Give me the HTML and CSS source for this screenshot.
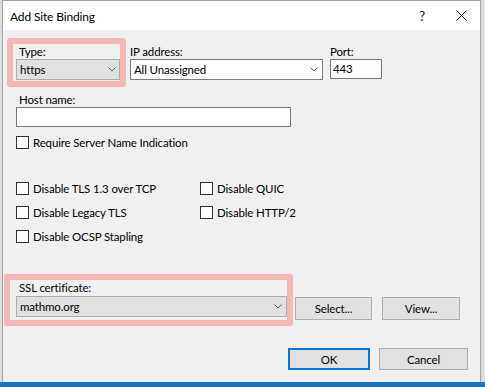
FILE: index.html
```html
<!DOCTYPE html>
<html>
<head>
<meta charset="utf-8">
<link rel="stylesheet" href="styles.css">
</head>
<body>
<div class="screen">
  <div class="dialog">
    <div class="titlebar">
      <span class="title">Add Site Binding</span>
      <span class="help">?</span>
      <svg class="close" width="11" height="11" viewBox="0 0 11 11"><path d="M0.5 0.5 L10.5 10.5 M10.5 0.5 L0.5 10.5" stroke="#111" stroke-width="1" fill="none"/></svg>
    </div>
    <div class="content">
      <div class="row1">
        <div class="hl hl-type">
          <div class="lbl">Type:</div>
          <div class="combo combo-type"><span>https</span><svg class="chev" width="8" height="5" viewBox="0 0 8 5"><path d="M0.5 0.5 L4 4 L7.5 0.5" stroke="#555" fill="none"/></svg></div>
        </div>
        <div class="field ip">
          <div class="lbl0">IP address:</div>
          <div class="combo combo-white combo-ip"><span>All Unassigned</span><svg class="chev" width="8" height="5" viewBox="0 0 8 5"><path d="M0.5 0.5 L4 4 L7.5 0.5" stroke="#555" fill="none"/></svg></div>
        </div>
        <div class="field port">
          <div class="lbl0">Port:</div>
          <div class="textbox tb-port">443</div>
        </div>
      </div>
      <div class="host">
        <div class="lbl">Host name:</div>
        <div class="textbox tb-host"></div>
      </div>
      <div class="check sni"><span class="box"></span><span>Require Server Name Indication</span></div>
      <div class="checks">
        <div class="check"><span class="box"></span><span>Disable TLS 1.3 over TCP</span></div>
        <div class="check"><span class="box"></span><span>Disable QUIC</span></div>
        <div class="check"><span class="box"></span><span>Disable Legacy TLS</span></div>
        <div class="check"><span class="box"></span><span>Disable HTTP/2</span></div>
        <div class="check"><span class="box"></span><span>Disable OCSP Stapling</span></div>
      </div>
      <div class="ssl-row">
        <div class="hl hl-ssl">
          <div class="lbl lbl-ssl">SSL certificate:</div>
          <div class="combo combo-ssl"><span>mathmo.org</span><svg class="chev" width="8" height="5" viewBox="0 0 8 5"><path d="M0.5 0.5 L4 4 L7.5 0.5" stroke="#555" fill="none"/></svg></div>
        </div>
        <div class="btn btn-select">Select...</div>
        <div class="btn btn-view">View...</div>
      </div>
      <div class="actions">
        <div class="btn btn-ok">OK</div>
        <div class="btn btn-cancel">Cancel</div>
      </div>
    </div>
  </div>
</div>
<div class="taskbar"></div>
</body>
</html>
```
FILE: styles.css
```css
* { box-sizing: border-box; }
html, body { margin: 0; padding: 0; }
body {
  width: 485px;
  height: 387px;
  overflow: hidden;
  background: #dedede;
  font-family: Lato, "Noto Sans", sans-serif;
  font-size: 11.5px;
  letter-spacing: -0.15px;
  color: #000;
  display: flex;
  flex-direction: column;
}
.screen {
  height: 382px;
  padding-left: 2px;
  display: flex;
}
.taskbar {
  height: 5px;
  background: #1677c6;
}
.dialog {
  width: 479px;
  height: 382px;
  background: #f0f0f0;
  border: 1px solid #a3a3a3;
  border-bottom: none;
  display: flex;
  flex-direction: column;
}
.titlebar {
  height: 29px;
  background: #fff;
  display: flex;
  align-items: center;
  padding-left: 7px;
}
.title { flex: 1; font-size: 12px; padding-top: 1px; }
.help { font-size: 13px; margin-right: 31px; }
.close { margin-right: 13px; }
.content {
  padding-top: 8px;
  display: flex;
  flex-direction: column;
}
.row1 { display: flex; align-items: flex-start; }
.hl {
  border: 6px solid #f5b6b6;
  border-radius: 3px;
}
.hl-type {
  margin-left: 4px;
  width: 119px;
  padding: 0 0 1px 3px;
}
.lbl { margin-left: 3px; line-height: 15px; height: 15px; }
.lbl0 { line-height: 15px; height: 15px; }
.combo {
  height: 21px;
  background: #e1e1e1;
  border: 1px solid #adadad;
  display: flex;
  align-items: center;
  justify-content: space-between;
  padding: 0 4px 0 3px;
}
.combo-white { background: #fff; border-color: #7a7a7a; }
.combo-type { width: 104px; padding-right: 3px; }
.ip { margin-left: 4px; margin-top: 6px; }
.combo-ip { width: 193px; }
.port { margin-left: 7px; margin-top: 6px; }
.textbox {
  height: 20px;
  background: #fff;
  border: 1px solid #7a7a7a;
  padding-left: 2px;
  line-height: 18px;
}
.tb-port { width: 52px; }
.host { margin-top: 5px; padding-left: 13px; }
.tb-host { width: 275px; }
.check {
  display: flex;
  align-items: center;
  height: 16px;
}
.box {
  width: 13px;
  height: 13px;
  border: 1px solid #333;
  background: #fff;
  margin-right: 4px;
  flex: none;
}
.sni { margin-top: 7px; margin-left: 13px; }
.checks {
  margin-top: 30px;
  margin-left: 13px;
  display: grid;
  grid-template-columns: 184px auto;
  row-gap: 8px;
}
.ssl-row { margin-top: 30px; display: flex; align-items: flex-start; }
.hl-ssl {
  margin-left: 1px;
  width: 289px;
  padding: 0 1px 3px 6px;
}
.lbl-ssl { line-height: 16px; height: 16px; }
.combo-ssl { width: 271px; }
.btn {
  height: 23px;
  background: #e1e1e1;
  border: 1px solid #adadad;
  display: flex;
  align-items: center;
  justify-content: center;
}
.btn-select { margin-top: 23px; margin-left: 2px; width: 77px; }
.btn-view { margin-top: 23px; margin-left: 10px; width: 78px; }
.actions { margin-top: 22px; padding-left: 285px; display: flex; }
.btn-ok { width: 82px; height: 22px; border: 2px solid #0078d7; }
.btn-cancel { width: 89px; height: 22px; margin-left: 9px; }
```
